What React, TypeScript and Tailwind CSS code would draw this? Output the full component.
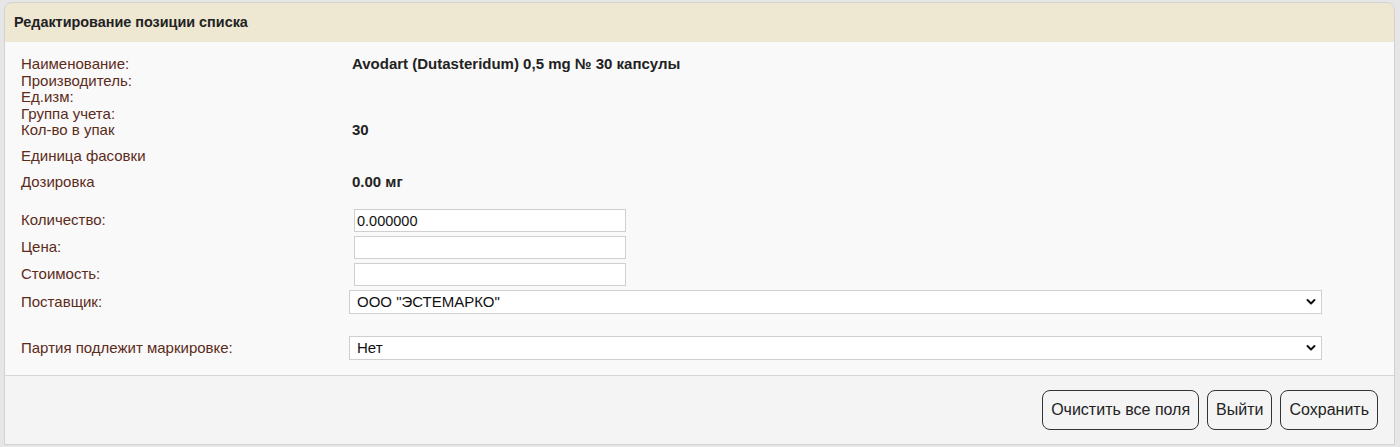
import React from "react";

const font = { fontFamily: '"Liberation Sans", Arial, sans-serif' };

function Chevron() {
  return (
    <svg width="10" height="7" viewBox="0 0 10 7" className="pointer-events-none absolute right-[6px] top-1/2 -translate-y-1/2">
      <path d="M1.5 1.5 L5 5 L8.5 1.5" fill="none" stroke="#111" strokeWidth="2" strokeLinecap="round" strokeLinejoin="round" />
    </svg>
  );
}

function Select({ value }: { value: string }) {
  return (
    <div className="relative w-[973px] h-[24px]">
      <select
        defaultValue={value}
        className="appearance-none w-full h-full border border-[#cfcfcf] bg-white pl-[7px] text-[15px] text-[#111] outline-none"
        style={font}
      >
        <option>{value}</option>
      </select>
      <Chevron />
    </div>
  );
}

function Input({ value = "" }: { value?: string }) {
  return (
    <input
      defaultValue={value}
      className="ml-[5px] w-[272px] h-[23px] border border-[#cfcfcf] bg-white px-[2px] text-[14.5px] text-[#111] outline-none"
      style={font}
    />
  );
}

const label = "w-[328px] shrink-0 text-[15px] text-[#5c2b1a]";
const value = "pl-[3px] text-[15px] font-bold text-[#222]";

export default function App() {
  return (
    <div className="bg-[#e6e6e6] h-[447px] pt-[2px] pl-[4px] pr-[5px]" style={font}>
      <div className="border border-[#d2d2d2] rounded-t-[8px] overflow-hidden">
        <div className="h-[39px] bg-[#eee7d2] flex items-center pl-[9px] text-[14.4px] font-bold text-[#222]">
          Редактирование позиции списка
        </div>
        <div className="bg-[#f9f9f9] border-b border-[#d6d6d6] pl-[16px] pt-[14px] pb-[15px]">
          <div className="leading-[16.5px]">
            <div className="flex">
              <div className={label}>Наименование:</div>
              <div className={value}>Avodart (Dutasteridum) 0,5 mg № 30 капсулы</div>
            </div>
            <div className="flex">
              <div className={label}>Производитель:</div>
            </div>
            <div className="flex">
              <div className={label}>Ед.изм:</div>
            </div>
            <div className="flex">
              <div className={label}>Группа учета:</div>
            </div>
            <div className="flex">
              <div className={label}>Кол-во в упак</div>
              <div className={value}>30</div>
            </div>
          </div>
          <div className="mt-[4.5px] flex items-center h-[26px]">
            <div className={label}>Единица фасовки</div>
          </div>
          <div className="flex items-center h-[26px]">
            <div className={label}>Дозировка</div>
            <div className={value}>0.00 мг</div>
          </div>
          <div className="mt-[14px] flex items-center">
            <div className={label}>Количество:</div>
            <Input value="0.000000" />
          </div>
          <div className="mt-[4px] flex items-center">
            <div className={label}>Цена:</div>
            <Input />
          </div>
          <div className="mt-[4px] flex items-center">
            <div className={label}>Стоимость:</div>
            <Input />
          </div>
          <div className="mt-[4px] flex items-center">
            <div className={label}>Поставщик:</div>
            <Select value={'ООО "ЭСТЕМАРКО"'} />
          </div>
          <div className="mt-[22px] flex items-center">
            <div className={label}>Партия подлежит маркировке:</div>
            <Select value="Нет" />
          </div>
        </div>
        <div className="bg-[#f4f4f4] h-[68px] flex justify-end items-start pt-[14px] pr-[16px] gap-[8px]">
          {["Очистить все поля", "Выйти", "Сохранить"].map((t) => (
            <button
              key={t}
              className="h-[40px] px-[8px] border border-[#333] rounded-[8px] text-[16px] text-[#222] bg-transparent"
              style={font}
            >
              {t}
            </button>
          ))}
        </div>
      </div>
    </div>
  );
}
